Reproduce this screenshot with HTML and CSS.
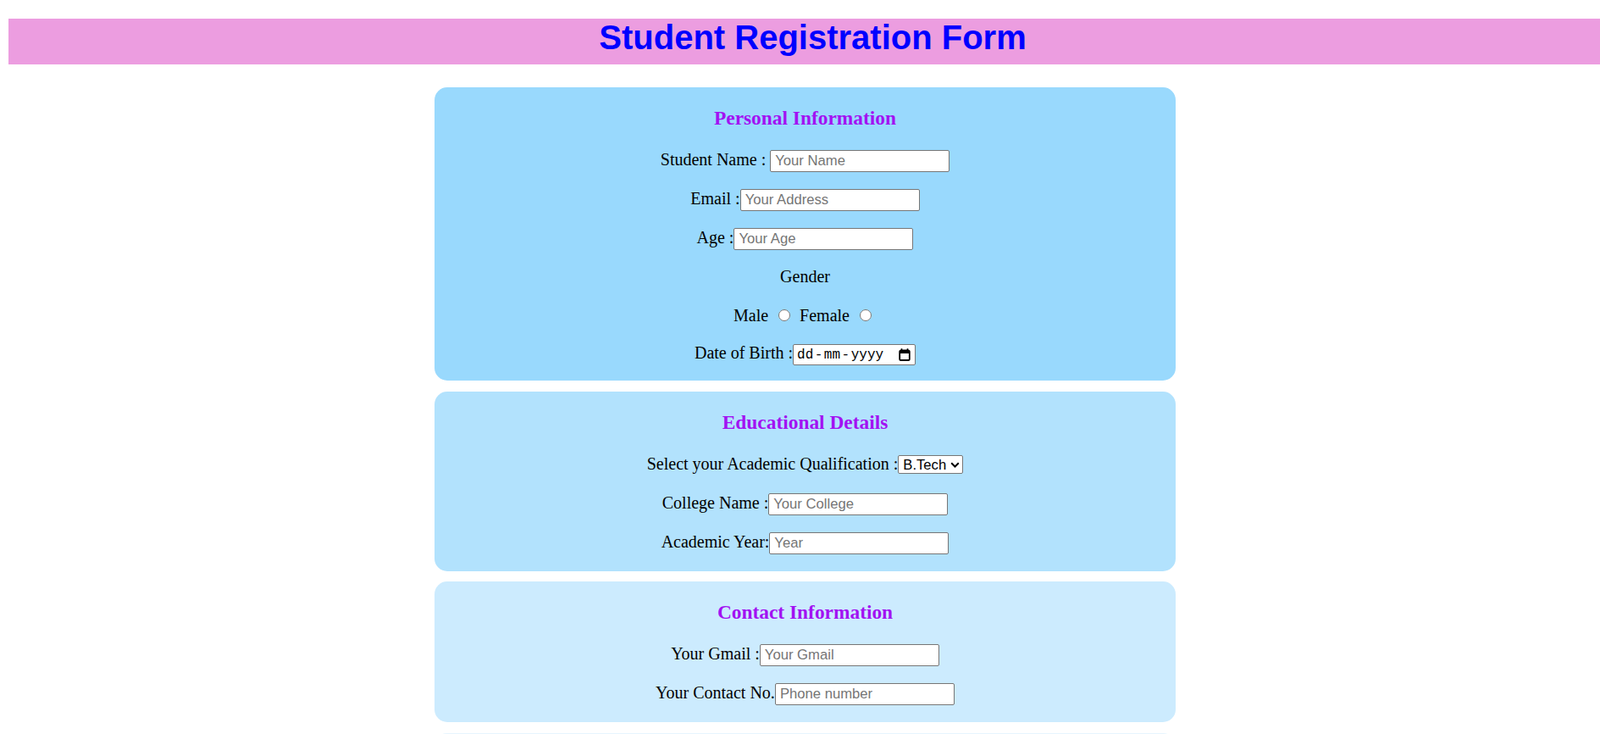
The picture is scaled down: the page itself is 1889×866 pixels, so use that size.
FILE: index.html
```html
<!DOCTYPE html>
<html lang="en">
<head>
<meta charset="utf-8">
<title>Student Registration Form</title>
<link rel="stylesheet" href="styles.css">
</head>
<body class="site">
<div class="page">
  <h1 class="banner">Student Registration Form</h1>
  <form class="form">
    <section class="card card-personal">
      <h3 class="card-title">Personal Information</h3>
      <div class="row"><label class="lbl" for="sname">Student Name :</label> <input class="field" id="sname" type="text" placeholder="Your Name"></div>
      <div class="row"><label class="lbl" for="email">Email :</label><input class="field" id="email" type="text" placeholder="Your Address"></div>
      <div class="row"><label class="lbl" for="age">Age :</label><input class="field" id="age" type="text" placeholder="Your Age"></div>
      <div class="row">Gender</div>
      <div class="row"><label class="lbl" for="male">Male</label> <input class="radio" id="male" type="radio" name="gender"> <label class="lbl" for="female">Female</label> <input class="radio" id="female" type="radio" name="gender"></div>
      <div class="row row-tight"><label class="lbl">Date of Birth :</label><span class="date-field"><span class="date-text"><span class="seg">dd</span><span class="dash">-</span><span class="seg">mm</span><span class="dash">-</span><span class="seg">yyyy</span></span><svg class="cal-icon" width="14" height="15" viewBox="0 0 14 15"><path d="M3.5 0.3v2.6M10.5 0.3v2.6" stroke="#000" stroke-width="1.7"/><rect x="1.2" y="2.4" width="11.6" height="11.6" rx="1.6" fill="none" stroke="#000" stroke-width="1.8"/><rect x="1.2" y="2.4" width="11.6" height="3.6" fill="#000"/></svg></span></div>
    </section>

    <section class="card card-edu">
      <h3 class="card-title">Educational Details</h3>
      <div class="row"><label class="lbl" for="qual">Select your Academic Qualification :</label><span class="select-wrap"><select class="select" id="qual"><option>B.Tech</option><option>M.Tech</option><option>BCA</option><option>MCA</option></select><svg class="chevron" width="11" height="7" viewBox="0 0 11 7"><polyline points="1.2,1.2 5.5,5.5 9.8,1.2" fill="none" stroke="#000" stroke-width="2"/></svg></span></div>
      <div class="row"><label class="lbl" for="college">College Name :</label><input class="field" id="college" type="text" placeholder="Your College"></div>
      <div class="row"><label class="lbl" for="year">Academic Year:</label><input class="field" id="year" type="text" placeholder="Year"></div>
    </section>

    <section class="card card-contact">
      <h3 class="card-title">Contact Information</h3>
      <div class="row"><label class="lbl" for="gmail">Your Gmail :</label><input class="field" id="gmail" type="text" placeholder="Your Gmail"></div>
      <div class="row"><label class="lbl" for="phone">Your Contact No.</label><input class="field" id="phone" type="text" placeholder="Phone number"></div>
    </section>

    <section class="card card-next"></section>
  </form>
</div>
</body>
</html>
```

FILE: styles.css
```css
.site {
  margin: 0;
  overflow-x: hidden;
  background: #ffffff;
  font-family: "Liberation Serif", "Times New Roman", serif;
}

.page {
  width: 1881px;
  margin: 22px 0 0 10px;
}

.banner {
  box-sizing: border-box;
  width: 1899px;
  height: 54px;
  margin: 0;
  padding-top: 2px;
  background: #ec9de0;
  color: #0000ff;
  font-family: "Liberation Sans", Arial, sans-serif;
  font-size: 40px;
  font-weight: bold;
  line-height: 40px;
  text-align: center;
}

.form {
  width: 875px;
  margin: 27px auto 0;
  display: flex;
  flex-direction: column;
  gap: 12.5px;
}

.card {
  border-radius: 15px;
  padding: 22px 0 12px;
  text-align: center;
}

.card-personal { background: #99d9fd; }
.card-edu { background: #b2e2fd; }
.card-contact { background: #ccebfe; }
.card-next { background: #e6f5fe; height: 120px; }

.card-title {
  margin: 0 0 12px;
  font-size: 23.4px;
  line-height: 28px;
  font-weight: bold;
  color: #a212f2;
}

.row {
  font-size: 20px;
  line-height: 46px;
  color: #000;
  white-space: nowrap;
}

.row-tight {
  line-height: 42px;
}

.lbl {
  color: #000;
}

.field {
  box-sizing: border-box;
  width: 212px;
  height: 26px;
  margin: 0;
  padding: 0 5px;
  border: 1px solid #767676;
  border-radius: 2px;
  background: #fff;
  font-family: "Liberation Sans", Arial, sans-serif;
  font-size: 16.67px;
  color: #000;
  vertical-align: baseline;
}

.field::placeholder {
  color: #757575;
}

.radio {
  width: 14px;
  height: 14px;
  margin: 0 6px 1.6px 7px;
  vertical-align: baseline;
}

.date-field {
  box-sizing: border-box;
  display: inline-flex;
  align-items: flex-start;
  justify-content: space-between;
  width: 145px;
  height: 25px;
  padding: 3px 5px 1px 4px;
  border: 1px solid #767676;
  border-radius: 2px;
  background: #fff;
  vertical-align: baseline;
  line-height: normal;
}

.date-text {
  display: inline-flex;
  font-family: "Liberation Mono", "Courier New", monospace;
  font-size: 16px;
  line-height: 19px;
  color: #000;
}

.dash {
  margin: 0 1.5px;
}

.cal-icon {
  align-self: center;
  margin-top: -2px;
}

.select-wrap {
  position: relative;
  display: inline-flex;
  line-height: normal;
  vertical-align: baseline;
}

.select {
  box-sizing: border-box;
  appearance: none;
  -webkit-appearance: none;
  width: 77px;
  height: 22px;
  margin: 0;
  padding: 0 16px 0 5px;
  border: 1px solid #767676;
  border-radius: 2px;
  background: #fff;
  font-family: "Liberation Sans", Arial, sans-serif;
  font-size: 16.67px;
  color: #000;
}

.chevron {
  position: absolute;
  right: 4px;
  top: 8px;
  pointer-events: none;
}
```
